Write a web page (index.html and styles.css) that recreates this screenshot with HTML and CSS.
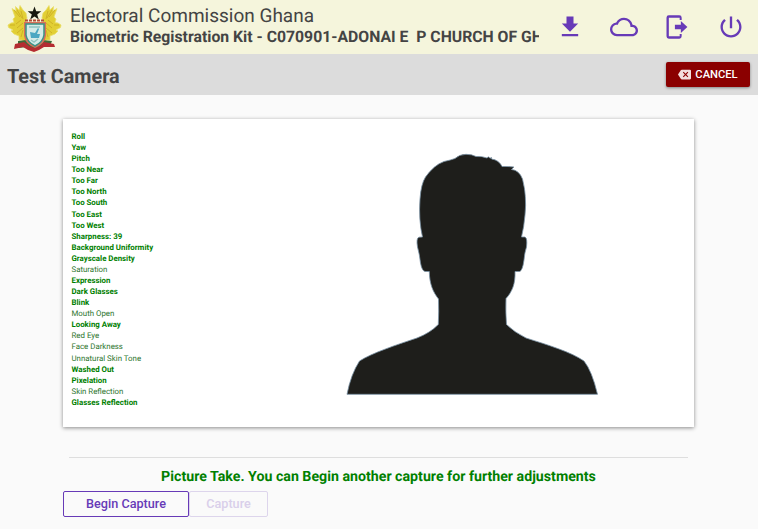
FILE: index.html
```html
<!DOCTYPE html>
<html lang="en">
<head>
<meta charset="utf-8">
<title>Test Camera</title>
<link rel="stylesheet" href="styles.css">
</head>
<body>
<header class="header">
  <svg class="crest" viewBox="0 0 56 50" aria-hidden="true">
    <g id="eagle">
      <path class="gold" d="M5 5.500L9 8 8.500 3.500 12 7 13 2.500 16 7 19 10 20 15 18 20 19 29 18 34 20 40 15 37 12 37 12 33 7 31 4 28 6 27 1.500 24.500 1 22 4 20 7 19.500 6 16 8 14z"/>
      <path class="feather" d="M7 7l6 7M10 7l5 8M14 8l2 8M3 22l5 0M9 21l5-4M10 25l6-5M10 30l6-5M14 34l2-7"/>
    </g>
    <use href="#eagle" transform="matrix(-1 0 0 1 55 0)"/>
    <path class="ground" d="M11 38l8-1 8 4 8-4 10 1-2 5-9 1-7 4-7-4-9 1z"/>
    <path class="ribbon" d="M8 41l9-2 5 4 5 2 6-2 4-4 10 2 1 3-11 0-5 3-5 2-6-2-5-3-9 2z"/>
    <path class="shield-rim" d="M17 19h22v14q-1 8-11 12Q18 41 17 33z"/>
    <path class="shield" d="M19 21h18v11q-1 7-9 11-8-4-9-11z"/>
    <path class="shield-detail" d="M22 24h11M24 37l3 2 4-3"/>
    <path class="emblem" d="M23 29l5 1 3-5 1 1-2 5 3 0-1 4-8 0z"/>
    <path class="wreath" d="M18 17.500h20"/>
    <path class="star" d="M27.500 3.500l1.700 4.800h5.100l-4.100 3.100 1.600 5-4.300-2.900-4.300 2.900 1.600-5-4.100-3.100h5.100z"/>
  </svg>
  <div class="heading">
    <div class="org">Electoral Commission Ghana</div>
    <div class="kit">Biometric Registration Kit - C070901-ADONAI E&nbsp; P CHURCH OF GHANA</div>
  </div>
  <nav class="actions">
    <svg viewBox="0 0 24 24"><path d="M19 9h-4V3H9v6H5l7 7 7-7zM5 18v2h14v-2H5z"/></svg>
    <svg viewBox="0 0 24 24"><path d="M19.350 10.040A7.490 7.490 0 0 0 12 4C9.110 4 6.600 5.640 5.350 8.040A5.994 5.994 0 0 0 0 14c0 3.310 2.690 6 6 6h13c2.760 0 5-2.240 5-5 0-2.640-2.050-4.780-4.650-4.960zM19 18H6c-2.210 0-4-1.790-4-4s1.790-4 4-4h.71C7.370 7.690 9.480 6 12 6c3.040 0 5.500 2.460 5.500 5.500v.5H19c1.660 0 3 1.340 3 3s-1.340 3-3 3z"/></svg>
    <svg viewBox="0 0 24 24"><path d="M15.300 17.200V14H10.200v-4h5.100V6.800L20.900 12zM5 2h9a2 2 0 0 1 2 2v2h-1.700V4H5v16h9.300v-2H16v2a2 2 0 0 1-2 2H5a2 2 0 0 1-2-2V4a2 2 0 0 1 2-2z"/></svg>
    <svg viewBox="0 0 24 24"><path d="M13 3h-2v10h2V3zm4.830 2.170l-1.420 1.420A6.920 6.920 0 0 1 19 12c0 3.870-3.130 7-7 7s-7-3.130-7-7c0-2.190 1.010-4.140 2.580-5.420L6.170 5.170A8.932 8.932 0 0 0 3 12c0 4.970 4.030 9 9 9s9-4.030 9-9c0-2.740-1.230-5.180-3.170-6.830z"/></svg>
  </nav>
</header>
<div class="toolbar">
  <h1 class="title">Test Camera</h1>
  <button class="cancel"><svg viewBox="0 0 24 24"><path d="M22 3H7c-.69 0-1.230.35-1.590.88L0 12l5.410 8.110c.36.53.9.89 1.590.89h15a2 2 0 0 0 2-2V5a2 2 0 0 0-2-2zm-3 12.590L17.590 17 14 13.410 10.410 17 9 15.590 12.590 12 9 8.410 10.410 7 14 10.590 17.590 7 19 8.410 15.410 12z"/></svg>CANCEL</button>
</div>
<main class="content">
  <section class="card">
    <ul class="checks">
      <li>Roll</li>
      <li>Yaw</li>
      <li>Pitch</li>
      <li>Too Near</li>
      <li>Too Far</li>
      <li>Too North</li>
      <li>Too South</li>
      <li>Too East</li>
      <li>Too West</li>
      <li>Sharpness: 39</li>
      <li>Background Uniformity</li>
      <li>Grayscale Density</li>
      <li class="plain">Saturation</li>
      <li>Expression</li>
      <li>Dark Glasses</li>
      <li>Blink</li>
      <li class="plain">Mouth Open</li>
      <li>Looking Away</li>
      <li class="plain">Red Eye</li>
      <li class="plain">Face Darkness</li>
      <li class="plain">Unnatural Skin Tone</li>
      <li>Washed Out</li>
      <li>Pixelation</li>
      <li class="plain">Skin Reflection</li>
      <li>Glasses Reflection</li>
    </ul>
    <svg class="portrait" viewBox="345 152 254 244" aria-hidden="true">
      <path d="M347 394.300Q351 374 359.500 361C372 353 396 345 417 338Q430 333 438.300 324.500Q439 312 438.500 299C433 292 429.500 284 429.300 271.500H425Q422 271 420.500 263Q419.500 254 417.500 247Q416 238 419 237.200L422.500 237Q418.500 220 420 199Q421 184 425.500 177Q434 165 444 161.500Q451 160 455 158.500Q459 154.500 466 154.300Q472 154.300 476 156.500Q482 156 487 158L488.500 156.800L490 158.300L491.500 157.500V159Q499 160 502 166.500Q508 166.300 514 167L511.500 169.500Q519 170 522.500 179Q527 196 525 215Q524 227 521.500 237H525Q527.500 238 526.500 247Q524.500 253 524 260Q522.500 271 519.500 271.500H515C515.500 284 512 292 506 298.500Q505.500 312 506.500 324.500Q514 332 526 338C548 345 571 352 584 361Q592 371 597.500 394.300Z"/>
    </svg>
  </section>
  <section class="footer">
    <hr class="rule">
    <p class="status">Picture Take. You can Begin another capture for further adjustments</p>
    <div class="buttons">
      <button class="outline">Begin Capture</button>
      <button class="outline disabled" disabled>Capture</button>
    </div>
  </section>
</main>
</body>
</html>
```
FILE: styles.css
```css
* { box-sizing: border-box; }
body {
  margin: 0;
  height: 529px;
  overflow: hidden;
  background: #fafafa;
  color: #444;
  font-family: Roboto, sans-serif;
  text-rendering: geometricPrecision;
}
.header {
  display: flex;
  height: 54px;
  background: #f5f5dc;
}
.crest { width: 56px; height: 50px; margin: 3px 7px 0 7px; flex: none; }
.gold { fill: #e2cf35; stroke: #e8de6c; stroke-width: .8; }
.feather { fill: none; stroke: #c9a922; stroke-width: .8; }
.ground { fill: #3f6b3a; }
.ribbon { fill: #b52c31; }
.shield-rim { fill: #d9705a; }
.shield { fill: #d3ebe8; stroke: #3a9286; stroke-width: 1.500; }
.shield-detail { fill: none; stroke: #8fc4c0; stroke-width: 1.500; }
.emblem { fill: #4ba7c2; }
.wreath { fill: none; stroke: #b34a35; stroke-width: 2; stroke-dasharray: 3 1; }
.star { fill: #16180f; }
.heading { width: 469px; flex: none; overflow: hidden; white-space: nowrap; }
.org { margin-top: 3px; font-size: 19px; line-height: 25px; }
.kit { font-size: 15.780px; font-weight: 700; line-height: 18px; }
.actions { display: flex; gap: 25.670px; margin: 13px 0 0 17px; }
.actions svg { width: 28px; height: 28px; fill: #673ab7; }
.toolbar {
  display: flex;
  align-items: center;
  justify-content: space-between;
  height: 41px;
  padding: 0 8px 0 7px;
  background: #dcdcdc;
}
.title { margin: 4px 0 0; font-size: 19.800px; line-height: 24px; font-weight: 700; }
.cancel {
  display: flex;
  align-items: center;
  justify-content: center;
  width: 84px;
  height: 25px;
  padding: 0;
  gap: 4px;
  border: 0;
  border-radius: 2px;
  background: #8b0000;
  color: #fff;
  font: 500 11.200px/25px Roboto, sans-serif;
  box-shadow: 0 1px 3px rgba(0, 0, 0, .4);
}
.cancel svg { width: 13px; height: 13px; fill: #f3dede; }
.content { padding: 24px 63px 0 63px; }
.card {
  display: flex;
  width: 631px;
  height: 308px;
  padding: 12px 0 0 8.500px;
  background: #fff;
  box-shadow: 0 1px 4px rgba(0, 0, 0, .45);
}
.checks {
  width: 273.500px;
  margin: 0;
  padding: 0;
  list-style: none;
  color: #008000;
  font-size: 7.870px;
  line-height: 11.080px;
  font-weight: 700;
}
.plain { color: #2d752d; font-weight: 400; }
.portrait { width: 254px; height: 244px; margin-top: 21px; }
.portrait path { fill: #1e1e1b; stroke: #7891a3; stroke-width: .8; }
.rule { height: 1px; margin: 30px 7px 0 6px; border: 0; background: #dedede; }
.status {
  margin: 10px 0 0;
  width: 631px;
  color: #008000;
  font-size: 14.200px;
  font-weight: 700;
  line-height: 18px;
  text-align: center;
}
.buttons { display: flex; margin-top: 5px; }
.outline {
  width: 126px;
  height: 26px;
  padding: 0;
  border: 1px solid #673ab7;
  border-radius: 2px;
  background: transparent;
  color: #673ab7;
  font: 500 12.650px/24px Roboto, sans-serif;
}
.disabled { width: 79px; border-color: #ddd5ec; color: #d9cfea; }
```
